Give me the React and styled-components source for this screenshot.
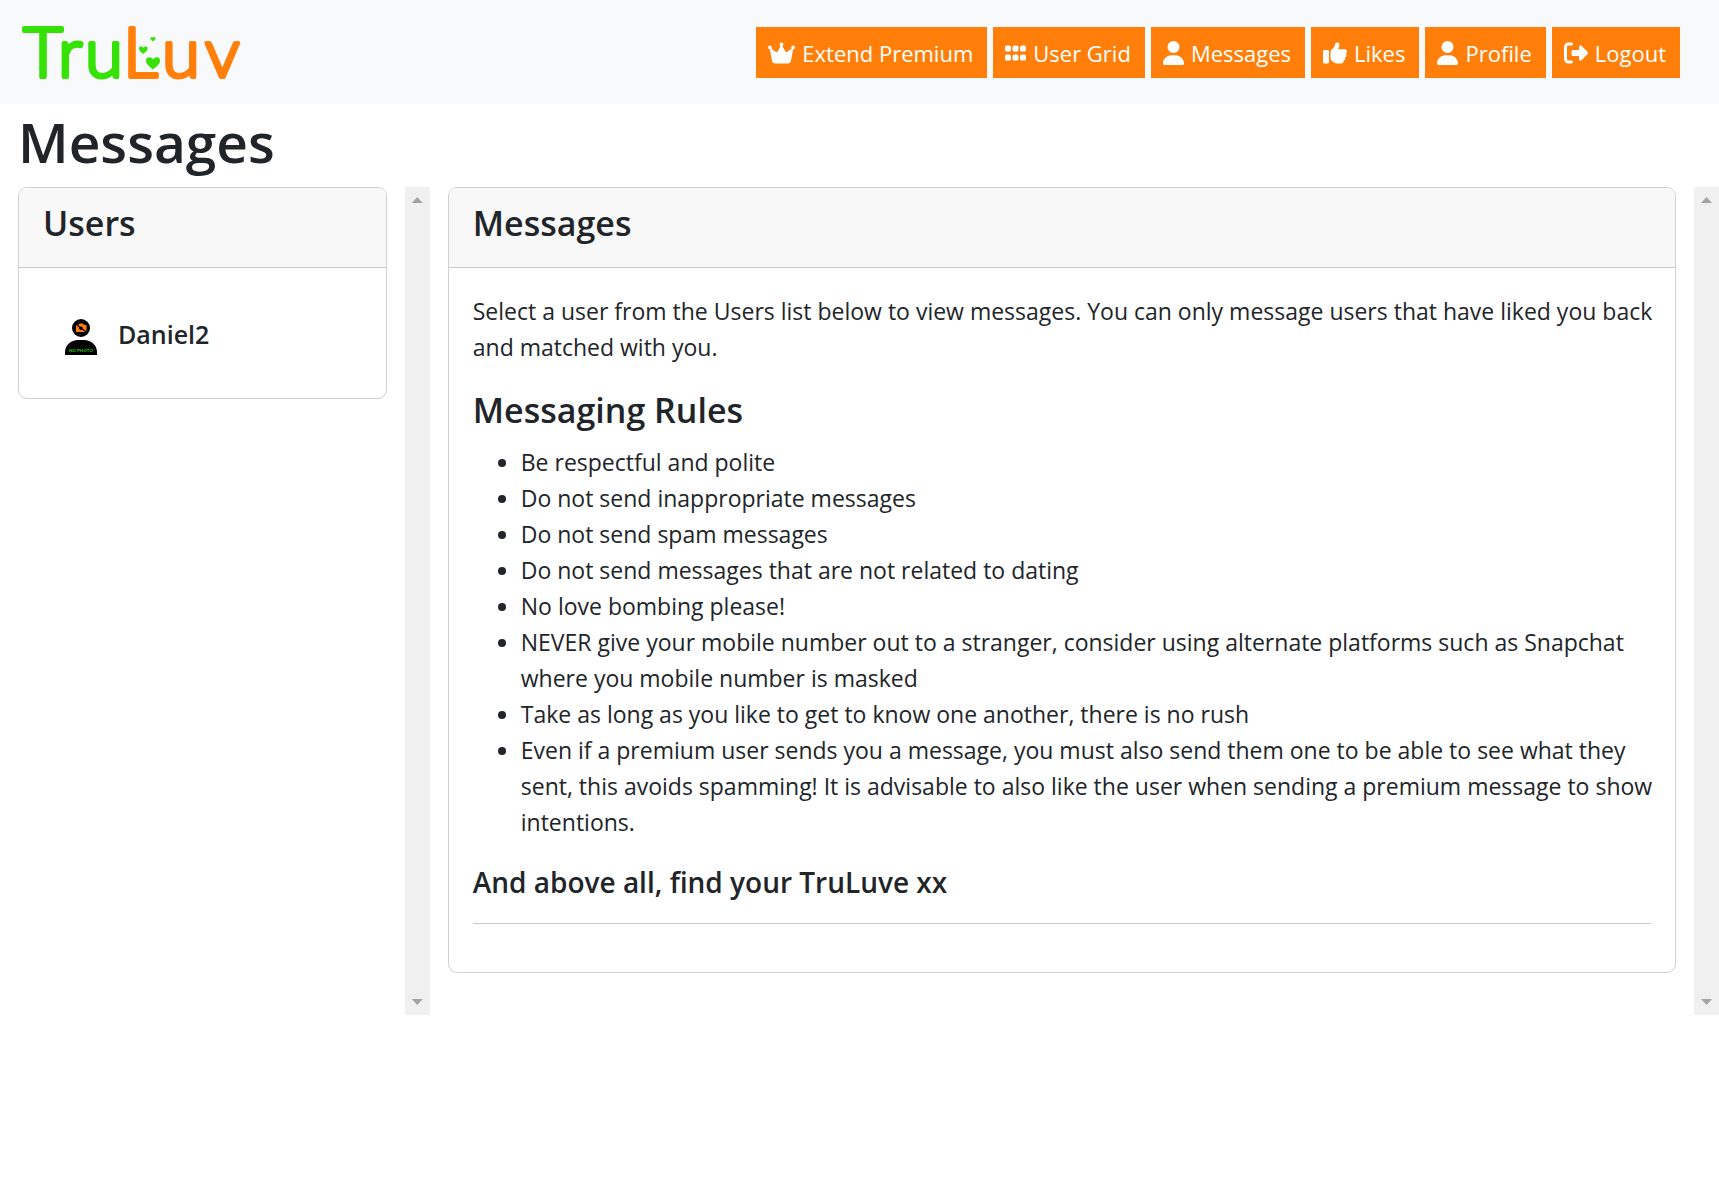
import React from "react";
import styled, { createGlobalStyle } from "styled-components";
import { FaCrown, FaGrip, FaUser, FaThumbsUp, FaRightFromBracket } from "react-icons/fa6";

const GlobalStyle = createGlobalStyle`
  *, *::before, *::after { box-sizing: border-box; }
  body {
    margin: 0;
    background: #fff;
    color: #212529;
    font-family: "Segoe UI", "Open Sans", "Noto Sans", sans-serif;
    font-size: 23px;
    line-height: 36px;
  }
`;

const Navbar = styled.header`
  display: flex;
  align-items: center;
  justify-content: space-between;
  min-height: 104px;
  padding: 0 39px 0 18px;
  background: #f8f9fb;
`;

const LogoLink = styled.a`
  display: block;
  line-height: 0;
`;

const Nav = styled.nav`
  display: flex;
  gap: 6px;
`;

const NavButton = styled.button`
  display: flex;
  align-items: center;
  gap: 7px;
  padding: 9px 14px 7px 12px;
  border: 0;
  background: #ff7f0a;
  color: #fff;
  font: inherit;
  font-size: 22px;
  line-height: 35px;
  white-space: nowrap;
  cursor: pointer;
`;

const NavIcon = styled.span`
  display: flex;
  svg { width: ${(p) => p.$width}px; height: 24px; }
`;

const PageTitle = styled.h1`
  margin: 0;
  padding: 2px 18px 9px;
  font-size: 55px;
  font-weight: 600;
  line-height: 72px;
`;

const Columns = styled.main`
  display: grid;
  grid-template-columns: 1fr 3fr;
  height: 70vh;
`;

const ScrollPane = styled.section`
  display: flex;
  min-width: 0;
  padding-left: 18px;
  gap: 18px;
`;

const PaneContent = styled.div`
  flex: 1;
  min-width: 0;
`;

const Rail = styled.div`
  display: flex;
  flex-direction: column;
  justify-content: space-between;
  align-items: center;
  width: 25px;
  padding: 10px 0;
  background: #f0f0f0;
`;

const Arrow = styled.span`
  width: 11px;
  height: 6px;
  background: #a3a3a3;
  clip-path: ${(p) => (p.$down ? "polygon(0 0, 100% 0, 50% 100%)" : "polygon(50% 0, 100% 100%, 0 100%)")};
`;

const Card = styled.article`
  border: 1px solid #d0d0d0;
  border-radius: 9px;
  background: #fff;
  overflow: hidden;
`;

const CardHeader = styled.header`
  padding: 14px 24px 22px;
  border-bottom: 1px solid #c9c9c9;
  background: #f8f8f8;
`;

const CardBody = styled.div`
  padding: 25px 24px 24px;
`;

const Heading = styled.h2`
  margin: 0;
  font-size: 34px;
  font-weight: 600;
  line-height: 43px;
`;

const UserButton = styled.button`
  display: flex;
  align-items: flex-start;
  gap: 21px;
  width: 100%;
  padding: 26px 22px 19px;
  border: 0;
  background: none;
  color: inherit;
  font: inherit;
  font-size: 25px;
  font-weight: 600;
  line-height: 30px;
  cursor: pointer;
`;

const Paragraph = styled.p`
  margin: 0 -8px 24px 0;
`;

const Rules = styled.ul`
  margin: 12px -8px 24px 0;
  padding-left: 48px;
`;

const SubHeading = styled.h3`
  margin: 0;
  font-size: 28px;
  font-weight: 600;
  line-height: 36px;
`;

const Divider = styled.hr`
  margin: 23px 0 24px;
  border: 0;
  border-top: 1px solid #c8c8c8;
`;

const HEART = "M0 4C-3 1-7-1-7-5-7-9-2-9 0-6 2-9 7-9 7-5 7-1 3 1 0 4Z";

function Logo() {
  return (
    <svg width="240" height="104" viewBox="18 0 240 104" role="img" aria-label="TruLuv">
      <g fontFamily="Lato, sans-serif" fontWeight="300" fontSize="69" strokeWidth="4" strokeLinejoin="round">
        <text y="77" x="23 58 85" fill="#36e205" stroke="#36e205">Tru</text>
        <text y="77" x="123 162 205" fill="#ff7f0a" stroke="#ff7f0a">Luv</text>
      </g>
      <g fill="#36e205">
        <path d={HEART} transform="translate(153 65.5)" />
        <path d={HEART} transform="translate(143.3 51.5) scale(.62)" />
        <path d={HEART} transform="translate(153 40) scale(.36)" />
      </g>
    </svg>
  );
}

function Avatar() {
  return (
    <svg width="32" height="36" viewBox="0 0 32 36" aria-hidden="true">
      <circle cx="16" cy="9" r="9" />
      <path d="M0 36V33C0 26 6 21 13 21H19C26 21 32 26 32 33V36Z" />
      <path d="M11 6H13.5L14.5 4.5H18L19 6H21.5V13H11Z" fill="#ff7f0a" />
      <circle cx="16" cy="9.3" r="1.8" />
      <path d="M10.5 5L22 13.5" stroke="#000" strokeWidth="1.2" />
      <text x="16" y="33" textAnchor="middle" fontSize="4.5" fontWeight="700" fill="#2bc80a" fontFamily="Lato, sans-serif">NO PHOTO</text>
    </svg>
  );
}

const NAV = [
  ["Extend Premium", FaCrown, 27],
  ["User Grid", FaGrip, 21],
  ["Messages", FaUser, 21],
  ["Likes", FaThumbsUp, 24],
  ["Profile", FaUser, 21],
  ["Logout", FaRightFromBracket, 24],
];

const RULES = [
  "Be respectful and polite",
  "Do not send inappropriate messages",
  "Do not send spam messages",
  "Do not send messages that are not related to dating",
  "No love bombing please!",
  "NEVER give your mobile number out to a stranger, consider using alternate platforms such as Snapchat where you mobile number is masked",
  "Take as long as you like to get to know one another, there is no rush",
  "Even if a premium user sends you a message, you must also send them one to be able to see what they sent, this avoids spamming! It is advisable to also like the user when sending a premium message to show intentions.",
];

function Pane({ title, children }) {
  return (
    <ScrollPane>
      <PaneContent>
        <Card>
          <CardHeader><Heading>{title}</Heading></CardHeader>
          <CardBody>{children}</CardBody>
        </Card>
      </PaneContent>
      <Rail aria-hidden="true"><Arrow /><Arrow $down /></Rail>
    </ScrollPane>
  );
}

export default function App() {
  return (
    <>
      <GlobalStyle />
      <Navbar>
        <LogoLink href="#"><Logo /></LogoLink>
        <Nav>
          {NAV.map(([label, Icon, width]) => (
            <NavButton key={label} type="button"><NavIcon $width={width}><Icon /></NavIcon>{label}</NavButton>
          ))}
        </Nav>
      </Navbar>
      <PageTitle>Messages</PageTitle>
      <Columns>
        <Pane title="Users">
          <UserButton type="button"><Avatar />Daniel2</UserButton>
        </Pane>
        <Pane title="Messages">
          <Paragraph>
            Select a user from the Users list below to view messages. You can only message users that have liked you back and matched with you.
          </Paragraph>
          <Heading>Messaging Rules</Heading>
          <Rules>{RULES.map((rule) => <li key={rule}>{rule}</li>)}</Rules>
          <SubHeading>And above all, find your TruLuve xx</SubHeading>
          <Divider />
        </Pane>
      </Columns>
    </>
  );
}
